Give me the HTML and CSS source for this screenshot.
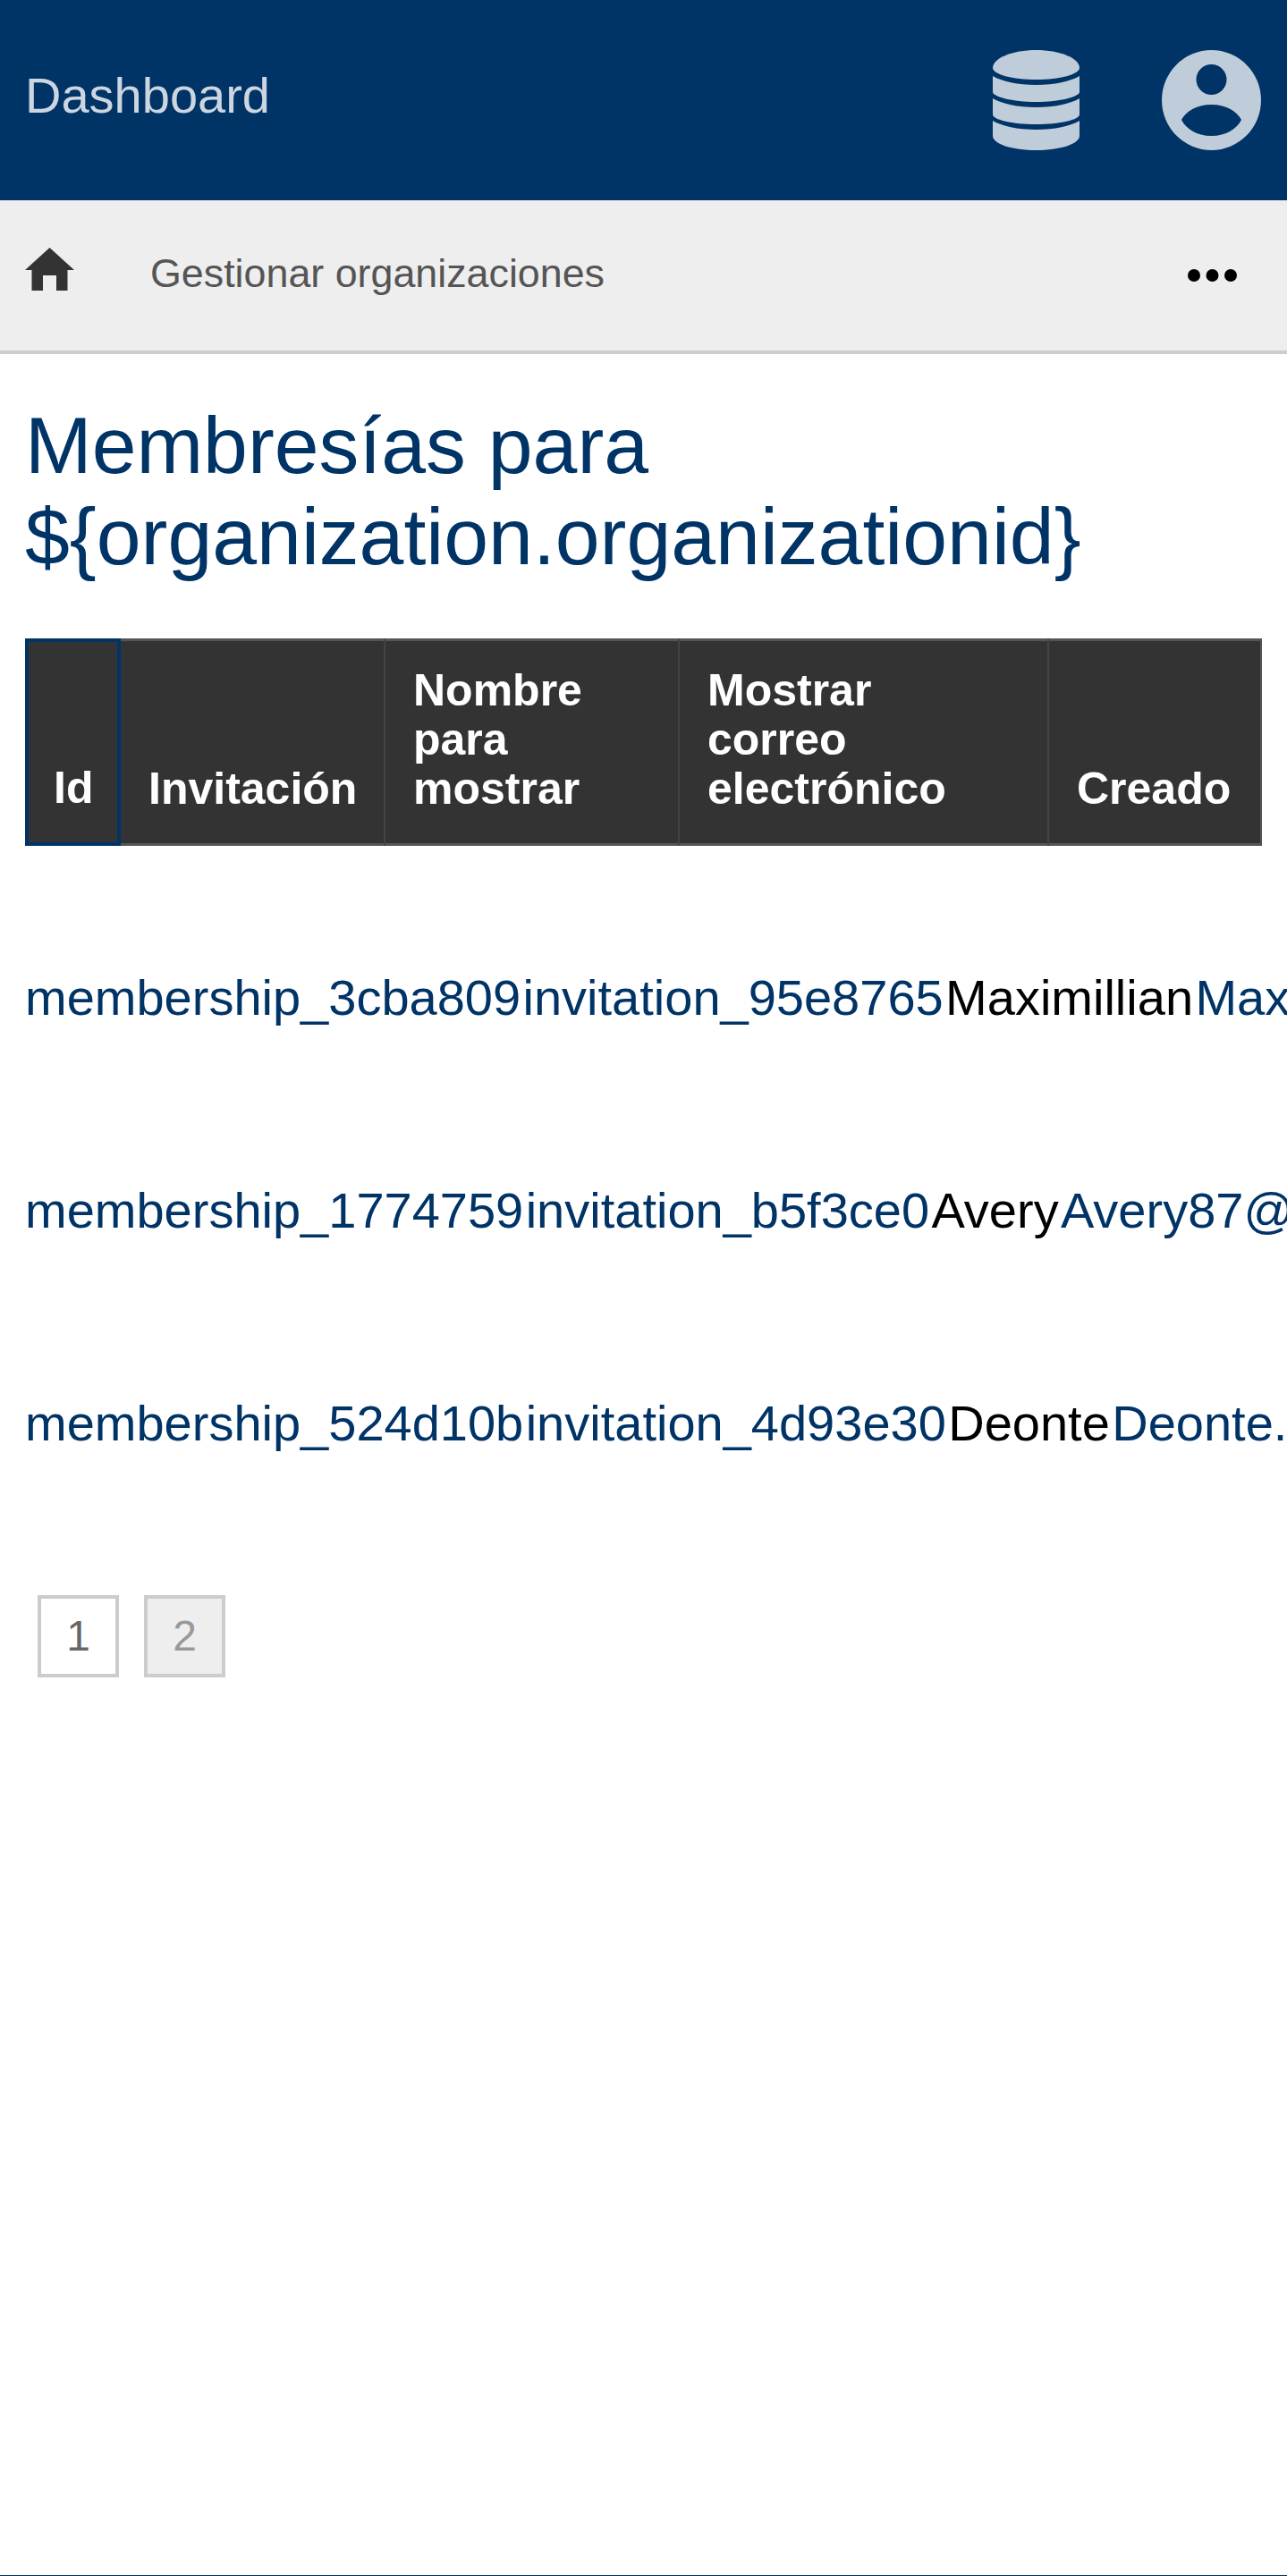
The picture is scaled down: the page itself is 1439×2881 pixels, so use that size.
FILE: index.html
```html
<!DOCTYPE html>
<html lang="es">
<head>
  <meta charset="UTF-8" />
  <meta name="viewport" content="width=device-width, initial-scale=1.0" />
  <title>Membresías</title>
  <link rel="stylesheet" href="styles.css">
</head>
<body>
  <header class="topbar">
    <a class="brand" href="#">Dashboard</a>
    <div class="topbar-icons">
      <!-- Database icon -->
      <svg class="icon-db" viewBox="0 0 97 112" aria-hidden="true">
        <path d="M0 20C0 9 22 0 48.5 0S97 9 97 20C97 27 75 33 48.5 33S0 27 0 20Z"/>
        <path d="M0 29C10 35 28 39 48.5 39S87 35 97 29V47C97 52 75 58 48.5 58S0 52 0 47Z"/>
        <path d="M0 54C10 60 28 64 48.5 64S87 60 97 54V72C97 78 75 83 48.5 83S0 78 0 72Z"/>
        <path d="M0 79C10 85 28 89 48.5 89S87 85 97 79V96C97 105 75 112 48.5 112S0 105 0 96Z"/>
      </svg>
      <!-- User icon -->
      <svg class="icon-user" viewBox="0 0 111 112" aria-hidden="true">
        <path fill-rule="evenodd" d="M55.5 0A55.5 56 0 1 1 55.5 112A55.5 56 0 1 1 55.5 0ZM55.5 16A17 17 0 1 0 55.5 50A17 17 0 1 0 55.5 16ZM22 78C27 68 40 61 55.5 61S84 68 89 78C84 88 72 96 55.5 96S27 88 22 78Z"/>
      </svg>
    </div>
  </header>

  <nav class="subnav">
    <a class="home-link" href="#">
      <svg class="icon-home" viewBox="0 0 55 48" aria-hidden="true">
        <path d="M27.5 0L55 25H47.5V48H35V31H20V48H7.5V25H0Z"/>
      </svg>
    </a>
    <a class="subnav-link" href="#">Gestionar organizaciones</a>
    <svg class="icon-more" viewBox="0 0 55 14" aria-hidden="true">
      <circle cx="7" cy="7" r="7"/>
      <circle cx="27.5" cy="7" r="7"/>
      <circle cx="48" cy="7" r="7"/>
    </svg>
  </nav>

  <main class="content">
    <h1 class="page-title">Membresías para ${organization.organizationid}</h1>

    <table class="members">
      <thead>
        <tr>
          <th class="col-id">Id</th>
          <th class="col-invite">Invitación</th>
          <th class="col-name">Nombre para mostrar</th>
          <th class="col-email">Mostrar correo electrónico</th>
          <th class="col-created">Creado</th>
        </tr>
      </thead>
      <tbody>
        <tr>
          <td><a href="#">membership_3cba809</a></td>
          <td><a href="#">invitation_95e8765</a></td>
          <td>Maximillian</td>
          <td><a href="#">Maximillian_Koss@example.com</a></td>
        </tr>
        <tr>
          <td><a href="#">membership_1774759</a></td>
          <td><a href="#">invitation_b5f3ce0</a></td>
          <td>Avery</td>
          <td><a href="#">Avery87@example.com</a></td>
        </tr>
        <tr>
          <td><a href="#">membership_524d10b</a></td>
          <td><a href="#">invitation_4d93e30</a></td>
          <td>Deonte</td>
          <td><a href="#">Deonte.Kuhn@example.com</a></td>
        </tr>
      </tbody>
    </table>

    <div class="pager">
      <a class="page-btn" href="#">1</a>
      <a class="page-btn page-btn-current" href="#">2</a>
    </div>
  </main>

  <footer class="bottom-line"></footer>
</body>
</html>
```

FILE: styles.css
```css
/* Page frame */
html, body {
  height: 100%;
}
body {
  margin: 0;
  display: flex;
  flex-direction: column;
  overflow: hidden;
  background-color: #fff;
  color: #000;
  font-family: "Liberation Sans", Arial, sans-serif;
}
a {
  color: #003366;
  text-decoration: none;
}

/* Top bar */
.topbar {
  height: 224px;
  flex-shrink: 0;
  display: flex;
  align-items: center;
  justify-content: space-between;
  padding: 0 29px 0 28px;
  background-color: #003366;
}
.brand {
  margin-bottom: 12px;
  color: #ccd6e0;
  font-size: 56px;
}
.topbar-icons {
  display: flex;
  align-items: center;
  gap: 92px;
}
.icon-db,
.icon-user {
  display: block;
  height: 112px;
  fill: #bfccd9;
}
.icon-db {
  width: 97px;
}
.icon-user {
  width: 111px;
}

/* Second bar */
.subnav {
  height: 168px;
  flex-shrink: 0;
  display: flex;
  align-items: center;
  padding: 0 56px 0 28px;
  background-color: #eee;
  border-bottom: 4px solid #ccc;
}
.home-link {
  display: block;
  margin-right: 85px;
}
.icon-home {
  display: block;
  width: 55px;
  height: 48px;
  margin-top: -15px;
  fill: #333;
}
.subnav-link {
  flex: 1;
  margin-bottom: 5px;
  color: #555;
  font-size: 44.8px;
}
.icon-more {
  display: block;
  width: 55px;
  height: 14px;
  fill: #000;
}

/* Main content */
.content {
  flex: 1;
  min-width: 0;
  padding: 51px 28px 0;
}
.page-title {
  margin: 0 0 63px;
  color: #003366;
  font-size: 89.6px;
  font-weight: normal;
  line-height: 102px;
}

/* Members table */
.members {
  display: block;
  border-collapse: collapse;
}
.members thead {
  display: block;
}
.members thead tr {
  display: flex;
  width: 1383px;
  height: 232px;
  box-sizing: border-box;
  background-color: #333;
  border-top: 3px solid #555;
  border-bottom: 3px solid #555;
  border-right: 2px solid #555;
}
.members th {
  display: flex;
  align-items: flex-end;
  box-sizing: border-box;
  padding: 0 30px 36px 31px;
  margin: -3px 0;
  color: #fff;
  font-size: 50px;
  line-height: 55px;
  text-align: left;
  border-right: 2px solid #444;
}
.col-id {
  width: 107px;
  border: 4px solid #003366 !important;
  padding-left: 28px !important;
  padding-bottom: 33px !important;
}
.col-invite {
  width: 296px;
}
.col-name {
  width: 329px;
}
.col-email {
  width: 413px;
}
.col-created {
  width: 236px;
  border-right: 0 !important;
}
.members tbody {
  display: block;
  padding-top: 50px;
}
.members tbody tr {
  display: flex;
  gap: 2.4px;
  height: 238px;
  align-items: center;
  white-space: nowrap;
}
.members td {
  padding: 0;
  font-size: 56px;
}

/* Pagination */
.pager {
  display: flex;
  gap: 28px;
  margin: 74px 0 0 14px;
}
.page-btn {
  width: 91px;
  height: 92px;
  box-sizing: border-box;
  display: flex;
  align-items: center;
  justify-content: center;
  padding-bottom: 2px;
  border: 4px solid #ccc;
  color: #666;
  font-size: 48px;
}
.page-btn-current {
  background-color: #eee;
  color: #999;
}

/* Thin line at the very bottom */
.bottom-line {
  flex-shrink: 0;
  height: 1px;
  background-color: #003366;
}
```
